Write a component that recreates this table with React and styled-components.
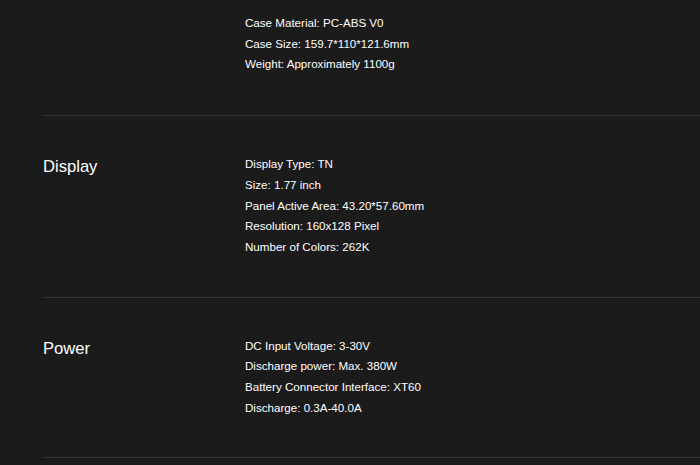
import React from "react";
import styled, { createGlobalStyle } from "styled-components";

const Global = createGlobalStyle`
  html, body {
    margin: 0;
    padding: 0;
    background: #1b1b1b;
  }
  body {
    font-family: "Liberation Sans", Arial, sans-serif;
    color: #f2f2f2;
  }
`;

const Page = styled.div`
  padding-left: 43px;
  background: #1b1b1b;
  min-height: 465px;
  overflow: hidden;
`;

const Section = styled.section`
  display: grid;
  grid-template-columns: 202px 1fr;
  padding: ${(p) => (p.$first ? "13px 0 40px" : "38px 0 39px")};
  border-bottom: 1px solid #333333;
`;

const Heading = styled.h3`
  margin: 0;
  font-size: 16.6px;
  font-weight: 400;
  line-height: 25px;
  color: #ffffff;
`;

const List = styled.ul`
  margin: 0;
  padding: 0;
  list-style: none;
`;

const Item = styled.li`
  font-size: 11.6px;
  line-height: 20.7px;
  color: #ffffff;
  white-space: nowrap;
`;

const sections = [
  {
    title: "",
    items: [
      "Case Material: PC-ABS V0",
      "Case Size: 159.7*110*121.6mm",
      "Weight: Approximately 1100g",
    ],
  },
  {
    title: "Display",
    items: [
      "Display Type: TN",
      "Size: 1.77 inch",
      "Panel Active Area: 43.20*57.60mm",
      "Resolution: 160x128 Pixel",
      "Number of Colors: 262K",
    ],
  },
  {
    title: "Power",
    items: [
      "DC Input Voltage: 3-30V",
      "Discharge power: Max. 380W",
      "Battery Connector Interface: XT60",
      "Discharge: 0.3A-40.0A",
    ],
  },
];

export default function App() {
  return (
    <>
      <Global />
      <Page>
        {sections.map((s, i) => (
          <Section key={i} $first={i === 0}>
            <Heading>{s.title}</Heading>
            <List>
              {s.items.map((t) => (
                <Item key={t}>{t}</Item>
              ))}
            </List>
          </Section>
        ))}
      </Page>
    </>
  );
}
